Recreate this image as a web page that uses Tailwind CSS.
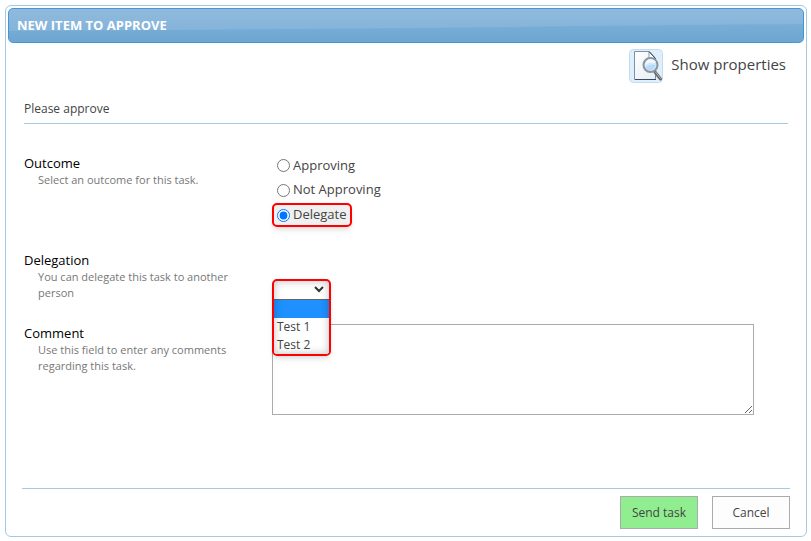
<!DOCTYPE html>
<html lang="en">
<head>
    <meta charset="UTF-8">
    <meta name="viewport" content="width=device-width, initial-scale=1.0">
    <title>New item to approve</title>
    <script src="https://cdn.jsdelivr.net/npm/@tailwindcss/browser@4"></script>
</head>
<body class="bg-white p-[5px] pr-1 font-['Open_Sans','Noto_Sans',sans-serif] text-[13px] text-[#444]">
    <!-- Dialog -->
    <form class="rounded-[6px] border border-[#a6c9e2] p-[2px]">
        <!-- Title bar -->
        <header class="relative flex h-[35px] items-center overflow-hidden rounded-[5px] border border-[#4297d7] bg-linear-to-b from-[#8fbadd] to-[#7fb0d8] px-2">
            <svg class="absolute inset-0 h-full w-full" viewBox="0 0 796 33" preserveAspectRatio="none" aria-hidden="true">
                <defs>
                    <linearGradient id="gloss" x1="0" y1="0" x2="0" y2="1">
                        <stop offset="0" stop-color="#78aed7"/>
                        <stop offset="1" stop-color="#6ea6d1"/>
                    </linearGradient>
                </defs>
                <path d="M0 22 Q330 20 500 18 T796 15 V33 H0 Z" fill="url(#gloss)"/>
            </svg>
            <h1 class="relative text-[13px] font-bold text-white">NEW ITEM TO APPROVE</h1>
        </header>

        <div class="px-4">
            <!-- Properties link -->
            <div class="flex justify-end pt-[6px] pr-[2px]">
                <a href="#" class="flex items-start gap-2 text-[15px] leading-[30px]">
                    <svg class="h-[34px] w-[34px]" viewBox="0 0 34 34" aria-hidden="true">
                        <defs>
                            <linearGradient id="sheet" x1="0" y1="0" x2="1" y2="1">
                                <stop offset="0" stop-color="#fff"/>
                                <stop offset="1" stop-color="#e6edf6"/>
                            </linearGradient>
                        </defs>
                        <rect x=".5" y=".5" width="33" height="33" rx="4" fill="#dfeffc" stroke="#c5dbec"/>
                        <path d="M5.5 2.5H20L26.500 9.500V30.500H5.500Z" fill="url(#sheet)" stroke="#7c8fb0"/>
                        <path d="M20 2.500V9.500H26.500Z" fill="#fff" stroke="#8a9ab5"/>
                        <path d="M20 2.500L26.500 9.500" stroke="#333f58"/>
                        <path d="M6 30.500H27" stroke="#3d4961"/>
                        <path d="M26 23L31.500 30" stroke="#666" stroke-width="3" stroke-linecap="round"/>
                        <path d="M26.500 23L31.500 29.500" stroke="#bbb"/>
                        <circle cx="21.500" cy="16" r="7" fill="#cfe7fb" stroke="#8d949c" stroke-width="2"/>
                        <path d="M16 17Q19 13 22 14T27 13Q25 10 21 10T16 17Z" fill="#f1f9ff"/>
                        <path d="M17 18Q21 15 26.500 16Q25 21 21 21T17 18Z" fill="#b5dafa"/>
                    </svg>
                    Show properties
                </a>
            </div>

            <p class="mt-4 border-b border-[#a6c9e2] pb-1 text-[12px] leading-[20px]">Please approve</p>

            <!-- Fields -->
            <div class="mt-[30px] grid grid-cols-[248px_1fr] pr-[34px]">
                <div class="h-[97px]">
                    <h2 id="outcome-label" class="leading-[18px] text-black">Outcome</h2>
                    <p class="pl-[14px] text-[11px] leading-4 text-[#777]">Select an outcome for this task.</p>
                </div>
                <div role="radiogroup" aria-labelledby="outcome-label" class="flex flex-col items-start gap-[2px]">
                    <label class="flex h-[23px] items-center gap-[3px] px-[5px]">
                        <input type="radio" name="outcome" class="h-[13px] w-[13px]">
                        Approving
                    </label>
                    <label class="flex h-[22px] items-center gap-[3px] px-[5px]">
                        <input type="radio" name="outcome" class="h-[13px] w-[13px]">
                        Not Approving
                    </label>
                    <label class="flex h-[24px] items-center gap-[3px] rounded-[5px] border-2 border-[red] bg-[#f0f0f0] px-[3px] shadow-md">
                        <input type="radio" name="outcome" class="h-[13px] w-[13px]" checked>
                        Delegate
                    </label>
                </div>

                <div class="h-[73px]">
                    <label for="delegate" class="block leading-[18px] text-black">Delegation</label>
                    <p class="pl-[14px] text-[11px] leading-4 text-[#777]">You can delegate this task to another<br>person</p>
                </div>
                <div class="pt-[28px]">
                    <div class="relative w-[59px] text-[12px]">
                        <select id="delegate" class="h-[21px] w-full appearance-none bg-white px-1">
                            <option></option>
                            <option>Test 1</option>
                            <option>Test 2</option>
                        </select>
                        <svg class="pointer-events-none absolute top-[7px] right-[7px] h-[7px] w-[10px]" viewBox="0 0 10 7" fill="none" aria-hidden="true">
                            <path d="M1 1L5 5L9 1" stroke="#333" stroke-width="2"/>
                        </svg>
                        <!-- Open list -->
                        <div class="pointer-events-none absolute top-0 left-0 z-10 w-full overflow-hidden rounded-[5px] border-2 border-[red] pt-[18px] shadow-md">
                            <ul role="listbox" class="border-t border-[#666] bg-white leading-[18px]">
                                <li role="option" aria-selected="true" class="h-[18px] bg-[#1e90ff]"></li>
                                <li role="option" class="h-[18px] pl-[3px]">Test 1</li>
                                <li role="option" class="h-[18px] pl-[3px]">Test 2</li>
                            </ul>
                            <div class="absolute inset-0 shadow-[inset_0_0_8px_rgba(0,0,0,0.25)]"></div>
                        </div>
                    </div>
                </div>

                <div>
                    <label for="comment" class="block leading-[18px] text-black">Comment</label>
                    <p class="pl-[14px] text-[11px] leading-4 text-[#777]">Use this field to enter any comments<br>regarding this task.</p>
                </div>
                <textarea id="comment" class="h-[91px] w-full border border-[#ababab] bg-white p-1"></textarea>
            </div>

            <!-- Buttons -->
            <div class="mx-[-2px] mt-[73px] flex justify-end gap-[14px] border-t border-[#a6c9e2] pt-[7px] pb-[5px] text-[12px]">
                <button type="submit" class="h-[33px] w-[78px] border border-[#ababab] bg-[#90ee90]">Send task</button>
                <button type="button" class="h-[33px] w-[78px] border border-[#ababab] bg-[#fdfdfd]">Cancel</button>
            </div>
        </div>
    </form>
</body>
</html>
